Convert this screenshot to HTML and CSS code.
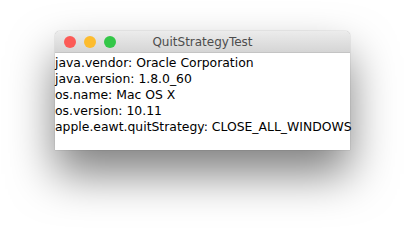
FILE: index.html
```html
<!DOCTYPE html>
<html lang="en">
<head>
    <meta charset="UTF-8">
    <title>QuitStrategyTest</title>
    <link rel="stylesheet" href="styles.css">
</head>
<body>
    <div class="ventana">
        <div class="barra">
            <div class="botones">
                <span class="boton rojo"></span>
                <span class="boton amarillo"></span>
                <span class="boton verde"></span>
            </div>
            <div class="titulo">QuitStrategyTest</div>
        </div>
        <div class="contenido">
            <div>java.vendor: Oracle Corporation</div>
            <div>java.version: 1.8.0_60</div>
            <div>os.name: Mac OS X</div>
            <div>os.version: 10.11</div>
            <div>apple.eawt.quitStrategy: CLOSE_ALL_WINDOWS</div>
        </div>
    </div>
</body>
</html>
```

FILE: styles.css
```css
html, body {
    height: 100%;
}

body {
    margin: 0;
    min-height: 230px;
    background: #fff;
    font-family: "DejaVu Sans", "Open Sans", sans-serif;
    overflow: hidden;
}

.ventana {
    width: 295px;
    margin: 31px 0 0 55px;
    background: #fff;
    border-radius: 5px 5px 0 0;
    box-shadow: 0 24px 45px rgba(0, 0, 0, 0.5), 0 0 1px rgba(0, 0, 0, 0.5);
}

.barra {
    position: relative;
    height: 21px;
    display: flex;
    align-items: center;
    justify-content: center;
    background: linear-gradient(#ececec, #d5d5d5);
    border-bottom: 1px solid #c4c4c4;
    border-radius: 5px 5px 0 0;
}

.botones {
    position: absolute;
    left: 9px;
    top: 5px;
    display: flex;
    gap: 8px;
}

.boton {
    width: 12px;
    height: 12px;
    border-radius: 50%;
}

.rojo { background: #fc5b57; }
.amarillo { background: #fdbc2e; }
.verde { background: #33c748; }

.titulo {
    font-size: 12px;
    color: #4d4d4d;
}

.contenido {
    height: 95px;
    font-size: 12.4px;
    line-height: 16px;
    color: #000;
    padding-top: 2px;
    white-space: nowrap;
}
```
